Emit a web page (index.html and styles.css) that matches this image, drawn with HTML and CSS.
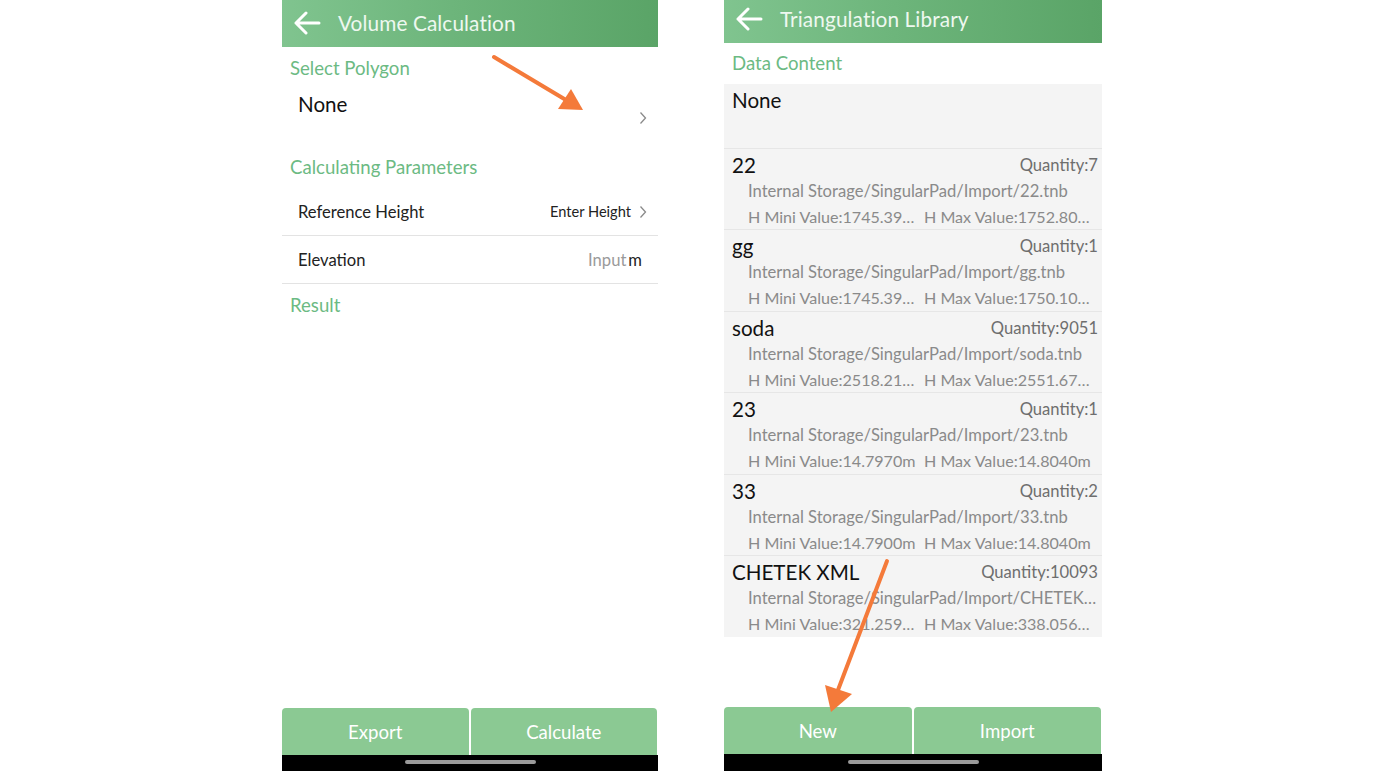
FILE: index.html
```html
<!DOCTYPE html>
<html>
<head>
<meta charset="utf-8">
<link rel="stylesheet" href="styles.css">
</head>
<body>
<div class="page">
  <div class="phone phone-left">
    <div class="header header-left">
      <svg class="back" width="28" height="24" viewBox="0 0 28 24"><path d="M26 12H3M13 2L3 12l10 10" fill="none" stroke="#fff" stroke-width="3" stroke-linecap="round" stroke-linejoin="round"/></svg>
      <span class="title">Volume Calculation</span>
    </div>
    <div class="content">
      <div class="sec">Select Polygon</div>
      <div class="poly-row">
        <span class="big">None</span>
        <svg class="chev chev-low" width="8" height="14" viewBox="0 0 8 14"><path d="M1.5 1.5L6.5 7l-5 5.5" fill="none" stroke="#8a8a8a" stroke-width="1.3"/></svg>
      </div>
      <div class="sec">Calculating Parameters</div>
      <div class="prow">
        <span>Reference Height</span>
        <span class="pval"><span class="enter">Enter Height</span><svg class="chev" width="8" height="14" viewBox="0 0 8 14"><path d="M1.5 1.5L6.5 7l-5 5.5" fill="none" stroke="#8a8a8a" stroke-width="1.3"/></svg></span>
      </div>
      <div class="prow">
        <span>Elevation</span>
        <span class="pval"><span class="input">Input</span><span class="unit">m</span></span>
      </div>
      <div class="sec">Result</div>
    </div>
    <div class="btns">
      <div class="btn">Export</div>
      <div class="btn">Calculate</div>
    </div>
    <div class="navbar"><div class="pill"></div></div>
  </div>

  <div class="phone phone-right">
    <div class="header header-right">
      <svg class="back" width="28" height="24" viewBox="0 0 28 24"><path d="M26 12H3M13 2L3 12l10 10" fill="none" stroke="#fff" stroke-width="3" stroke-linecap="round" stroke-linejoin="round"/></svg>
      <span class="title">Triangulation Library</span>
    </div>
    <div class="content">
      <div class="sec sec-r">Data Content</div>
      <div class="list">
        <div class="none-row"><span class="big">None</span></div>
        <div class="item">
          <div class="l1"><span class="name">22</span><span class="qty">Quantity:7</span></div>
          <div class="l2">Internal Storage/SingularPad/Import/22.tnb</div>
          <div class="l3"><span>H Mini Value:1745.3920m</span><span>H Max Value:1752.8040m</span></div>
        </div>
        <div class="item">
          <div class="l1"><span class="name">gg</span><span class="qty">Quantity:1</span></div>
          <div class="l2">Internal Storage/SingularPad/Import/gg.tnb</div>
          <div class="l3"><span>H Mini Value:1745.3920m</span><span>H Max Value:1750.1020m</span></div>
        </div>
        <div class="item">
          <div class="l1"><span class="name">soda</span><span class="qty">Quantity:9051</span></div>
          <div class="l2">Internal Storage/SingularPad/Import/soda.tnb</div>
          <div class="l3"><span>H Mini Value:2518.2140m</span><span>H Max Value:2551.6710m</span></div>
        </div>
        <div class="item">
          <div class="l1"><span class="name">23</span><span class="qty">Quantity:1</span></div>
          <div class="l2">Internal Storage/SingularPad/Import/23.tnb</div>
          <div class="l3"><span>H Mini Value:14.7970m</span><span>H Max Value:14.8040m</span></div>
        </div>
        <div class="item">
          <div class="l1"><span class="name">33</span><span class="qty">Quantity:2</span></div>
          <div class="l2">Internal Storage/SingularPad/Import/33.tnb</div>
          <div class="l3"><span>H Mini Value:14.7900m</span><span>H Max Value:14.8040m</span></div>
        </div>
        <div class="item last">
          <div class="l1"><span class="name">CHETEK XML</span><span class="qty">Quantity:10093</span></div>
          <div class="l2">Internal Storage/SingularPad/Import/CHETEK XML.tnb</div>
          <div class="l3"><span>H Mini Value:321.2590m</span><span>H Max Value:338.0560m</span></div>
        </div>
      </div>
    </div>
    <div class="btns btns-r">
      <div class="btn">New</div>
      <div class="btn">Import</div>
    </div>
    <div class="navbar navbar-r"><div class="pill"></div></div>
  </div>

  <svg class="overlay" width="1381" height="771" viewBox="0 0 1381 771">
    <line x1="494" y1="57" x2="566" y2="100" stroke="#f47a3a" stroke-width="4" stroke-linecap="round"/>
    <polygon points="583,110 558,109 571,89" fill="#f47a3a"/>
    <line x1="887" y1="561" x2="838" y2="690" stroke="#f47a3a" stroke-width="4" stroke-linecap="round"/>
    <polygon points="831,712 825,685 852,694" fill="#f47a3a"/>
  </svg>
</div>
</body>
</html>
```

FILE: styles.css
```css
* { box-sizing: border-box; }
html, body { margin: 0; padding: 0; background: #fff; }
body { font-family: Lato, "Noto Sans", sans-serif; color: #111; }

.page {
  position: relative;
  display: flex;
  gap: 66px;
  padding-left: 282px;
  height: 771px;
  overflow: hidden;
}

.phone {
  display: flex;
  flex-direction: column;
  height: 771px;
  background: #fff;
}
.phone-left { width: 376px; }
.phone-right { width: 378px; }

.header {
  display: flex;
  align-items: center;
  background: linear-gradient(90deg, #80c48f 0%, #6db57b 45%, #5aa467 100%);
  color: #eef8f0;
}
.header-left { height: 47px; padding-left: 11px; padding-bottom: 2px; }
.header-right { height: 43px; padding-left: 11px; padding-bottom: 6px; }
.back { flex: none; }
.title { font-size: 20.8px; margin-left: 17px; letter-spacing: 0.1px; }

.content { flex: 1; display: flex; flex-direction: column; }

.sec {
  height: 42px;
  line-height: 42px;
  padding-left: 8px;
  font-size: 18.6px;
  color: #6cba83;
}
.sec-r { height: 41px; line-height: 41px; }

.big { font-size: 20.6px; color: #111; line-height: 24px; }

.poly-row {
  height: 57px;
  display: flex;
  justify-content: space-between;
  align-items: flex-start;
  padding: 3px 11px 0 16px;
}
.chev-low { margin-top: 19px; }

.prow {
  height: 48px;
  display: flex;
  align-items: center;
  justify-content: space-between;
  padding: 0 16px;
  border-bottom: 1px solid #e3e3e3;
  font-size: 16.6px;
  color: #222;
}
.pval { display: flex; align-items: center; }
.enter { font-size: 14.6px; color: #222; margin-right: 8px; }
.pval .chev { margin-right: -5px; }
.input { color: #9a9a9a; font-size: 16.6px; }
.unit { color: #222; font-size: 16.6px; margin-left: 2px; }

.list { background: #f4f4f4; }
.none-row {
  height: 65px;
  padding: 4px 8px 0;
  border-bottom: 1px solid #e6e6e6;
}
.item {
  height: 81.4px;
  padding: 3px 4px 0 8px;
  border-bottom: 1px solid #e6e6e6;
}
.item.last { border-bottom: none; height: 81px; }
.l1 {
  display: flex;
  justify-content: space-between;
  align-items: center;
  height: 26px;
}
.name { font-size: 20.6px; color: #111; }
.qty { font-size: 16.6px; color: #6e6e6e; }
.l2 {
  height: 26px;
  line-height: 26px;
  padding-left: 16px;
  font-size: 16.6px;
  color: #8a8a8a;
  white-space: nowrap;
  overflow: hidden;
  text-overflow: ellipsis;
}
.l3 {
  height: 26px;
  line-height: 26px;
  padding-left: 16px;
  padding-right: 2px;
  display: flex;
  gap: 4px;
  font-size: 16.1px;
  color: #8a8a8a;
}
.l3 span {
  flex: 1 1 0;
  min-width: 0;
  white-space: nowrap;
  overflow: hidden;
  text-overflow: ellipsis;
}

.btns {
  height: 47px;
  display: flex;
  gap: 2px;
  padding-right: 1px;
}
.btn {
  flex: 1;
  background: #8bc993;
  border-radius: 4px 4px 0 0;
  color: #fff;
  font-size: 18.6px;
  display: flex;
  align-items: center;
  justify-content: center;
}

.navbar {
  height: 16px;
  background: #000;
  display: flex;
  justify-content: center;
  padding-top: 5px;
}
.navbar-r { height: 17px; padding-top: 6px; }
.pill {
  width: 131px;
  height: 4px;
  border-radius: 2px;
  background: #9a9a9a;
}

.overlay {
  position: absolute;
  left: 0;
  top: 0;
  pointer-events: none;
}
```
